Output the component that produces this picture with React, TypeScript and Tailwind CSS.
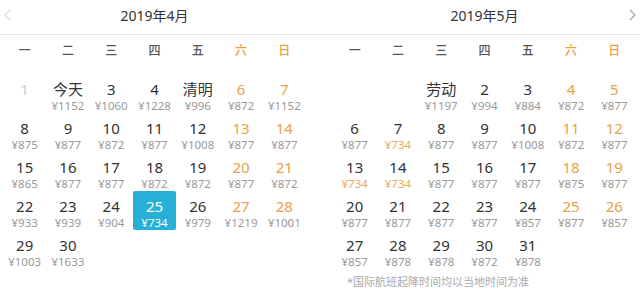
import React from "react";

type Cell = { d: string; p?: string; dis?: boolean; sel?: boolean; po?: boolean } | null;

const april: Cell[] = [
  { d: "1", dis: true },
  { d: "今天", p: "1152" },
  { d: "3", p: "1060" },
  { d: "4", p: "1228" },
  { d: "清明", p: "996" },
  { d: "6", p: "872" },
  { d: "7", p: "1152" },
  { d: "8", p: "875" },
  { d: "9", p: "877" },
  { d: "10", p: "872" },
  { d: "11", p: "877" },
  { d: "12", p: "1008" },
  { d: "13", p: "877" },
  { d: "14", p: "877" },
  { d: "15", p: "865" },
  { d: "16", p: "877" },
  { d: "17", p: "877" },
  { d: "18", p: "872" },
  { d: "19", p: "872" },
  { d: "20", p: "877" },
  { d: "21", p: "872" },
  { d: "22", p: "933" },
  { d: "23", p: "939" },
  { d: "24", p: "904" },
  { d: "25", p: "734", sel: true },
  { d: "26", p: "979" },
  { d: "27", p: "1219" },
  { d: "28", p: "1001" },
  { d: "29", p: "1003" },
  { d: "30", p: "1633" },
];

const may: Cell[] = [
  null,
  null,
  { d: "劳动", p: "1197" },
  { d: "2", p: "994" },
  { d: "3", p: "884" },
  { d: "4", p: "872" },
  { d: "5", p: "877" },
  { d: "6", p: "877" },
  { d: "7", p: "734", po: true },
  { d: "8", p: "877" },
  { d: "9", p: "877" },
  { d: "10", p: "1008" },
  { d: "11", p: "872" },
  { d: "12", p: "877" },
  { d: "13", p: "734", po: true },
  { d: "14", p: "734", po: true },
  { d: "15", p: "877" },
  { d: "16", p: "877" },
  { d: "17", p: "877" },
  { d: "18", p: "875" },
  { d: "19", p: "877" },
  { d: "20", p: "877" },
  { d: "21", p: "877" },
  { d: "22", p: "877" },
  { d: "23", p: "877" },
  { d: "24", p: "857" },
  { d: "25", p: "877" },
  { d: "26", p: "857" },
  { d: "27", p: "857" },
  { d: "28", p: "878" },
  { d: "29", p: "878" },
  { d: "30", p: "872" },
  { d: "31", p: "878" },
];

const weekdays = ["一", "二", "三", "四", "五", "六", "日"];

function Month({ cells }: { cells: Cell[] }) {
  return (
    <div className="w-[303px]">
      <div className="grid grid-cols-7 h-[31px] items-center text-[12px] font-medium">
        {weekdays.map((w, i) => (
          <div key={w} className={"text-center " + (i >= 5 ? "text-[#e9a040]" : "text-[#555555]")}>
            {w}
          </div>
        ))}
      </div>
      <div className="grid grid-cols-7 mt-[8px]">
        {cells.map((c, i) => {
          const wk = i % 7 >= 5;
          if (!c) return <div key={i} className="h-[39px]" />;
          return (
            <div
              key={i}
              className={
                "h-[39px] flex flex-col items-center pt-[6px] rounded-[2px] " +
                (c.sel ? "bg-[#27b0d5]" : "")
              }
            >
              <div
                className={
                  "text-[15px] leading-[19px] " +
                  (c.sel ? "text-white" : c.dis ? "text-[#cccccc]" : wk ? "text-[#e9a04a]" : "text-[#333333]")
                }
              >
                {c.d}
              </div>
              {c.p && (
                <div
                  className={
                    "text-[11.5px] leading-[14px] " +
                    (c.sel ? "text-white" : c.po ? "text-[#eeaa55]" : "text-[#999999]")
                  }
                >
                  ¥{c.p}
                </div>
              )}
            </div>
          );
        })}
      </div>
    </div>
  );
}

export default function App() {
  return (
    <div
      className="w-[640px] h-[291px] bg-white overflow-hidden"
      style={{ fontFamily: '"Noto Sans", "Noto Sans CJK SC", sans-serif' }}
    >
      <div className="relative h-[35px] border-b border-[#e6e6e6] flex px-[3px] gap-[27px]">
        <svg className="absolute left-[4px] top-[9px]" width="7" height="12" viewBox="0 0 7 12">
          <path d="M6 1L1 6l5 5" fill="none" stroke="#dddddd" strokeWidth="1.4" />
        </svg>
        <div className="w-[303px] text-center text-[14px] leading-[32px] text-[#333333]">2019年4月</div>
        <div className="w-[303px] text-center text-[14px] leading-[32px] text-[#333333]">2019年5月</div>
        <svg className="absolute right-[4px] top-[9px]" width="7" height="12" viewBox="0 0 7 12">
          <path d="M1 1l5 5-5 5" fill="none" stroke="#aaaaaa" strokeWidth="1.4" />
        </svg>
      </div>
      <div className="flex px-[3px] gap-[27px]">
        <Month cells={april} />
        <div className="flex flex-col">
          <Month cells={may} />
          <div className="ml-[14px] mt-[6px] text-[11px] leading-[14px] text-[#aaaaaa]">*国际航班起降时间均以当地时间为准</div>
        </div>
      </div>
    </div>
  );
}
